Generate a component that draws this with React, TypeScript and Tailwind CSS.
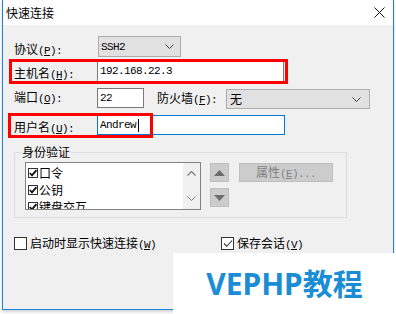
import React from "react";

const MONO = "font-['Liberation_Mono',monospace] text-[11px] tracking-[-0.6px]";

function Lbl({ t, k, colon = true }: { t: string; k: string; colon?: boolean }) {
  return (
    <span className="whitespace-nowrap text-[12px] leading-[16px] text-black">
      <span>{t}</span>
      <span className={MONO}>
        (<span className="underline">{k}</span>){colon ? ":" : ""}
      </span>
    </span>
  );
}

function Chevron({ color = "#444" }: { color?: string }) {
  return (
    <svg width="9" height="5" viewBox="0 0 9 5">
      <path d="M0.5 0.5 L4.5 4.5 L8.5 0.5" fill="none" stroke={color} strokeWidth="1" />
    </svg>
  );
}

function SmallCheck() {
  return (
    <div className="w-[10px] h-[10px] border border-[#333] bg-white flex items-center justify-center shrink-0">
      <svg width="8" height="8" viewBox="0 0 8 8">
        <path d="M0.8 4 L3 6.4 L7.4 1.2" fill="none" stroke="#111" strokeWidth="1.8" />
      </svg>
    </div>
  );
}

export default function App() {
  return (
    <div className="relative w-[396px] h-[314px] bg-white overflow-hidden font-['Noto_Sans_CJK_SC',sans-serif]">
      <div className="ml-[2px] w-[392px] h-[310px] border-l border-r border-b border-[#1a84d6] flex flex-col shadow-[0_2px_3px_rgba(0,0,0,0.18)]">
        {/* title bar */}
        <div className="h-[25px] bg-white flex items-center justify-between pl-[3px] shrink-0">
          <span className="text-[12px] leading-[16px] text-black">快速连接</span>
          <svg width="11" height="11" viewBox="0 0 11 11" className="mr-[8px]">
            <path d="M0.5 0.5 L10.5 10.5 M10.5 0.5 L0.5 10.5" stroke="#111" strokeWidth="1" />
          </svg>
        </div>
        {/* body */}
        <div className="flex-1 bg-[#f0f0f0] pl-[11px] pt-[11px] flex flex-col">
          {/* row 1 */}
          <div className="flex items-center h-[21px]">
            <div className="w-[84px]">
              <Lbl t="协议" k="P" />
            </div>
            <div className="w-[83px] h-[21px] bg-[#e1e1e1] border border-[#adadad] flex items-center justify-between pl-[2px] pr-[6px]">
              <span className={`${MONO} leading-[14px] text-black`}>SSH2</span>
              <Chevron />
            </div>
          </div>
          {/* row 2 */}
          <div className="flex items-center h-[22px] mt-[3px]">
            <div className="w-[83px]">
              <Lbl t="主机名" k="H" />
            </div>
            <div className="w-[187px] h-[22px] bg-white border border-[#7a7a7a] flex items-center pl-[2px]">
              <span className={`${MONO} leading-[14px] text-black`}>192.168.22.3</span>
            </div>
          </div>
          {/* row 3 */}
          <div className="flex items-start h-[21px] mt-[6px]">
            <div className="w-[83px] h-[20px] flex items-center">
              <Lbl t="端口" k="O" />
            </div>
            <div className="w-[47px] h-[20px] bg-white border border-[#7a7a7a] flex items-center pl-[2px]">
              <span className={`${MONO} leading-[14px] text-black`}>22</span>
            </div>
            <div className="ml-[13px] w-[69px] h-[21px] flex items-center">
              <Lbl t="防火墙" k="F" />
            </div>
            <div className="mt-[1px] w-[144px] h-[20px] bg-[#e1e1e1] border border-[#adadad] flex items-center justify-between pl-[3px] pr-[8px]">
              <span className="text-[12px] leading-[16px] text-black">无</span>
              <Chevron />
            </div>
          </div>
          {/* row 4 */}
          <div className="flex items-center h-[20px] mt-[6px]">
            <div className="w-[83px]">
              <Lbl t="用户名" k="U" />
            </div>
            <div className="w-[188px] h-[20px] bg-white border border-[#0078d7] flex items-center pl-[2px]">
              <span className={`${MONO} leading-[14px] text-black`}>Andrew</span>
              <span className="ml-[2px] w-px h-[13px] bg-black" />
            </div>
          </div>
          {/* group box */}
          <div className="relative mt-[17px] w-[333px] h-[66px] border border-[#dcdcdc] pl-[10px] pt-[9px] flex">
            <span className="absolute left-[6px] -top-[9px] px-[1px] bg-[#f0f0f0] text-[12px] leading-[16px] text-black">
              身份验证
            </span>
            <div className="w-[176px] h-[48px] border border-[#828282] bg-white flex overflow-hidden">
              <div className="flex-1 flex flex-col pl-[2px] pt-[1px]">
                {["口令", "公钥", "键盘交互"].map((s) => (
                  <div key={s} className="h-[17px] flex items-center shrink-0">
                    <SmallCheck />
                    <span className="ml-[1px] text-[12px] leading-[16px] text-black">{s}</span>
                  </div>
                ))}
              </div>
              <div className="w-[17px] h-full bg-[#f0f0f0] flex flex-col justify-between items-center pt-[8px] pb-[8px]">
                <svg width="9" height="5" viewBox="0 0 9 5">
                  <path d="M0.5 4.5 L4.5 0.5 L8.5 4.5" fill="none" stroke="#7a7a7a" strokeWidth="1.2" />
                </svg>
                <Chevron color="#7a7a7a" />
              </div>
            </div>
            <div className="ml-[9px] mt-[1px] flex flex-col gap-[6px]">
              <div className="w-[19px] h-[19px] bg-[#cccccc] border border-[#bfbfbf] flex items-center justify-center">
                <svg width="11" height="6" viewBox="0 0 11 6">
                  <path d="M0 6 L5.5 0 L11 6 Z" fill="#6d6d6d" />
                </svg>
              </div>
              <div className="w-[19px] h-[19px] bg-[#cccccc] border border-[#bfbfbf] flex items-center justify-center">
                <svg width="11" height="6" viewBox="0 0 11 6">
                  <path d="M0 0 L5.5 6 L11 0 Z" fill="#6d6d6d" />
                </svg>
              </div>
            </div>
            <div className="ml-[10px] mt-[1px] w-[94px] h-[19px] bg-[#cccccc] border border-[#bfbfbf] flex items-center justify-center">
              <span className="whitespace-nowrap text-[12px] leading-[16px] text-[#838383]">
                属性
                <span className={MONO}>
                  (<span className="underline">E</span>)...
                </span>
              </span>
            </div>
          </div>
          {/* bottom checkboxes */}
          <div className="flex items-center h-[13px] mt-[19px]">
            <div className="w-[207px] flex items-center">
              <div className="w-[13px] h-[13px] border border-[#333] bg-white shrink-0" />
              <span className="ml-[3px] whitespace-nowrap text-[12px] leading-[16px] text-black">
                启动时显示快速连接
                <span className={MONO}>
                  (<span className="underline">W</span>)
                </span>
              </span>
            </div>
            <div className="flex items-center">
              <div className="w-[13px] h-[13px] border border-[#333] bg-white shrink-0 flex items-center justify-center">
                <svg width="10" height="9" viewBox="0 0 10 9">
                  <path d="M1 4.5 L3.8 7.3 L9 1.5" fill="none" stroke="#333" strokeWidth="1.1" />
                </svg>
              </div>
              <span className="ml-[3px] whitespace-nowrap text-[12px] leading-[16px] text-black">
                保存会话
                <span className={MONO}>
                  (<span className="underline">V</span>)
                </span>
              </span>
            </div>
          </div>
        </div>
      </div>

      {/* red annotation boxes */}
      <div className="absolute left-[9px] top-[59px] w-[279px] h-[25px] border-[3px] border-[#f00]" />
      <div className="absolute left-[8px] top-[113px] w-[145px] h-[25px] border-[3px] border-[#f00]" />

      {/* watermark */}
      <div className="absolute left-[173px] top-[253px] right-0 bottom-0 bg-white flex items-center justify-center">
        <span className="text-[30px] leading-[36px] font-bold text-[#1b8dd4] font-['Noto_Sans',Noto_Sans_CJK_SC,sans-serif] whitespace-nowrap">
          VEPHP教程
        </span>
      </div>
    </div>
  );
}
